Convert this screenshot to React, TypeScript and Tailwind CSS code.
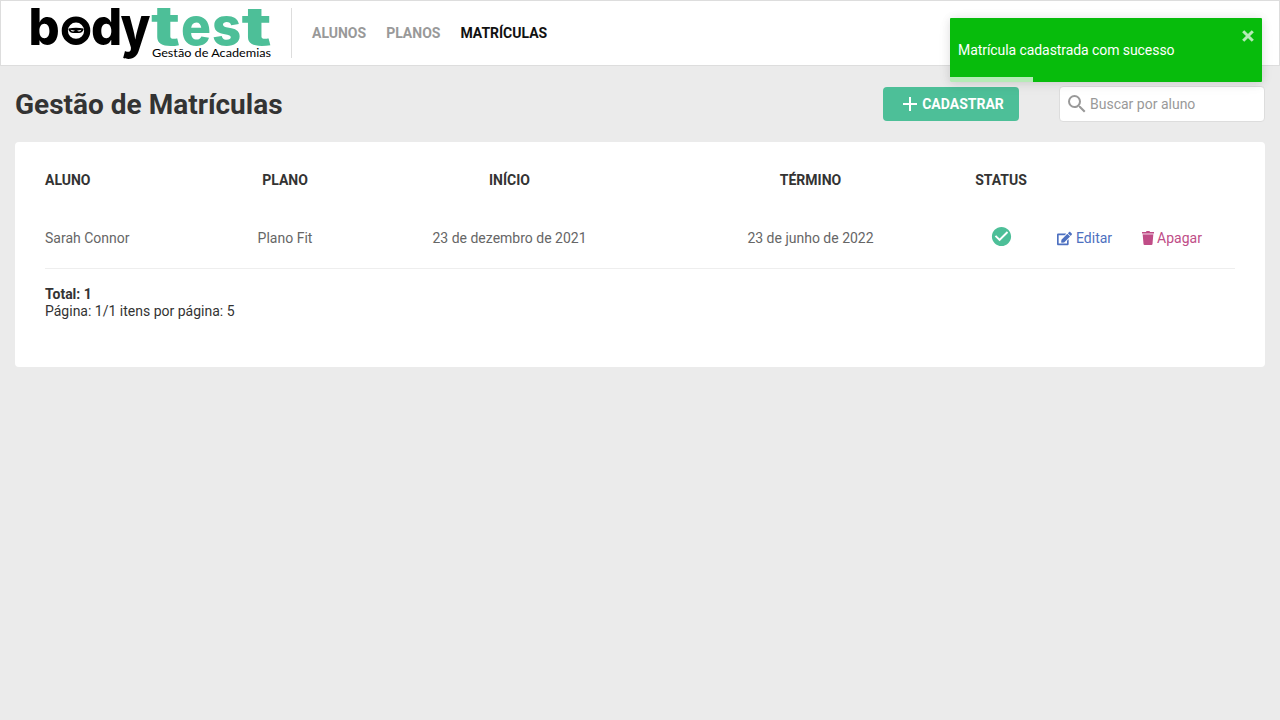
import { MdSearch, MdCheckCircle } from 'react-icons/md';
import { FaEdit } from 'react-icons/fa';

type Glyph = { char: string; x: number; y: number; sx: number; sy: number; color: string };

const glyphs: Glyph[] = [
  { char: 'b', x: -1.5, y: 38, sx: 0.96, sy: 1, color: '#000' },
  { char: 'd', x: 61, y: 38, sx: 0.96, sy: 1, color: '#000' },
  { char: 'y', x: 90.5, y: 40, sx: 0.95, sy: 1.1, color: '#000' },
  { char: 't', x: 121, y: 38, sx: 1.5, sy: 1.06, color: '#4dbf98' },
  { char: 'e', x: 151, y: 38, sx: 0.98, sy: 1.02, color: '#4dbf98' },
  { char: 's', x: 182, y: 38, sx: 1, sy: 1.02, color: '#4dbf98' },
  { char: 't', x: 211.5, y: 38, sx: 1.55, sy: 1.06, color: '#4dbf98' },
];

function Logo() {
  return (
    <svg width="241" height="52" viewBox="0 0 241 52" className="block shrink-0 overflow-visible" role="img" aria-label="bodytest">
      <g fontFamily="Inter, sans-serif" fontWeight="800" fontSize="51">
        {glyphs.map((g) => (
          <text key={g.x} transform={`translate(${g.x} ${g.y}) scale(${g.sx} ${g.sy})`} fill={g.color}>
            {g.char}
          </text>
        ))}
      </g>
      <circle cx="46" cy="23.7" r="11.2" fill="#fff" stroke="#000" strokeWidth="6.2" />
      <path d="M38.5 21.5Q46 20 53.5 21.5V23Q52 26 49 26H43Q40 26 38.5 23Z" fill="#000" />
      <path d="M40.5 22.8L45 23.8Q42 25.4 40.5 22.8M51.5 22.8L47 23.8Q50 25.4 51.5 22.8" fill="#fff" />
      <text x="122" y="50" fontFamily="Lato, sans-serif" fontSize="11.5" textLength="119" lengthAdjust="spacingAndGlyphs">
        Gestão de Academias
      </text>
    </svg>
  );
}

function PlusIcon() {
  return (
    <svg width="14" height="14" viewBox="0 0 14 14" className="mr-[5px]" stroke="#fff" strokeWidth="2">
      <path d="M7 0V14M0 7H14" />
    </svg>
  );
}

function TrashIcon() {
  return (
    <svg width="12" height="14" viewBox="0 0 12 14" fill="currentColor">
      <path d="M0 1H4L4.5 0H7.5L8 1H12V2.6H0ZM.7 3.6H11.3L10.5 13Q10.4 14 9.4 14H2.6Q1.6 14 1.5 13Z" />
      <path d="M.5 2.6H11.5V3.6H.5Z" opacity=".4" />
    </svg>
  );
}

const columns = 'grid grid-cols-[160px_160px_289px_313px_68px_1fr] items-center';

export default function App() {
  return (
    <div className="relative min-h-screen bg-[#ebebeb] text-sm text-[#333]" style={{ fontFamily: 'Roboto, sans-serif' }}>
      <header className="flex h-[66px] items-center border border-[#ddd] bg-white pl-[29px]">
        <Logo />
        <nav className="ml-5 flex h-[50px] items-center gap-5 border-l border-[#ddd] pl-5 font-bold text-[#999]">
          <a>ALUNOS</a>
          <a>PLANOS</a>
          <a className="text-[#111]">MATRÍCULAS</a>
        </nav>
      </header>

      <main className="px-[15px] pt-5">
        <div className="flex h-9 items-center">
          <h1 className="pt-0.5 text-[28px] font-bold">Gestão de Matrículas</h1>
          <button className="ml-auto flex h-[34px] w-[136px] items-center justify-center rounded bg-[#4dbf98] pl-[5px] font-bold text-white">
            <PlusIcon />
            CADASTRAR
          </button>
          <div className="ml-10 flex h-9 w-[206px] items-center rounded border border-[#ddd] bg-white pl-[5px] text-[#999]">
            <MdSearch size={24} className="mr-px" />
            <span>Buscar por aluno</span>
          </div>
        </div>

        <section className="mt-5 h-[225px] rounded bg-white px-[30px] pt-[28px]">
          <div className={`${columns} h-5 text-center font-bold`}>
            <span className="text-left">ALUNO</span>
            <span>PLANO</span>
            <span>INÍCIO</span>
            <span>TÉRMINO</span>
            <span>STATUS</span>
          </div>
          <div className={`${columns} mt-[18px] h-[61px] border-b border-[#eee] text-center text-[#666]`}>
            <span className="text-left">Sarah Connor</span>
            <span>Plano Fit</span>
            <span>23 de dezembro de 2021</span>
            <span>23 de junho de 2022</span>
            <MdCheckCircle size={23} className="mx-auto -mt-[3px] text-[#4dbf98]" />
            <div className="flex gap-[30px] pl-[22px]">
              <a className="flex items-center gap-1 text-[#4d70c0]"><FaEdit size={15} />Editar</a>
              <a className="flex items-center gap-[3px] text-[#c04d87]"><TrashIcon />Apagar</a>
            </div>
          </div>
          <div className="mt-[17px] leading-[17px]">
            <p className="font-bold">Total: 1</p>
            <p>Página: 1/1 itens por página: 5</p>
          </div>
        </section>
      </main>

      <div className="absolute left-[950px] top-[18px] flex h-16 w-[312px] items-center rounded-[1px] bg-[#07bc0c] px-2 text-white shadow-[0_1px_10px_0_rgba(0,0,0,0.1),0_2px_15px_0_rgba(0,0,0,0.05)]">
        <span className="tracking-[-0.07px]">Matrícula cadastrada com sucesso</span>
        <svg width="12" height="12" viewBox="0 0 12 12" className="absolute right-2 top-3 opacity-70" stroke="#fff" strokeWidth="3">
          <path d="M1.2 1.2L10.8 10.8M10.8 1.2L1.2 10.8" />
        </svg>
        <span className="absolute bottom-0 left-0 h-[5px] w-[83px] bg-white/70" />
      </div>
    </div>
  );
}
